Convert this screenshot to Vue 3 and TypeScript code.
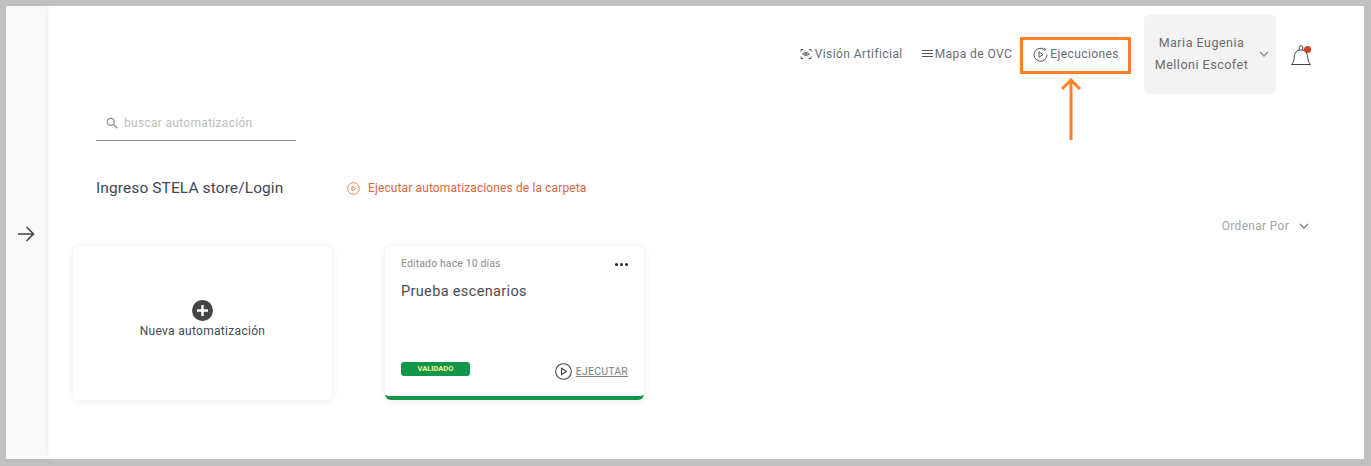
<template>
  <div class="frame">
    <aside class="side">
      <svg class="side-arrow" width="18" height="16" viewBox="0 0 18 16" fill="none" stroke="#444" stroke-width="1.6">
        <path d="M1 8h15M9.500 1l7 7-7 7" />
      </svg>
    </aside>
    <main class="main">
      <header class="top">
        <a class="nav nav-vision">
          <svg width="12" height="12" viewBox="0 0 12 12" fill="none" stroke="#555" stroke-width="1">
            <path d="M1 3.500V1.500h2M9 1.500h2v2M11 8.500v2H9M3 10.500H1v-2" />
            <path d="M2.500 6C3.500 4.300 8.500 4.300 9.500 6 8.500 7.700 3.500 7.700 2.500 6Z" />
            <circle cx="6" cy="6" r="1" fill="#555" stroke="none" />
          </svg>
          Visión Artificial
        </a>
        <a class="nav nav-map">
          <svg width="11" height="10" viewBox="0 0 11 10" fill="none" stroke="#555" stroke-width="1">
            <path d="M0 1.500h11M0 4.500h11M0 7.500h11" />
          </svg>
          Mapa de OVC
        </a>
        <a class="nav nav-exec">
          <svg width="15" height="15" viewBox="0 0 15 15" fill="none" stroke="#555" stroke-width="1">
            <path d="M11.500 2.600A6.500 6.500 0 1 0 14 7.500" />
            <path d="M11 1l1.800 1.300-1.300 1.800" />
            <path d="M6 4.800l4 2.700-4 2.700Z" />
          </svg>
          Ejecuciones
        </a>
        <button class="user">
          <span class="user-name">Maria Eugenia Melloni Escofet</span>
          <svg width="10" height="6" viewBox="0 0 10 6" fill="none" stroke="#8a8a8a" stroke-width="1.300">
            <path d="M1 1l4 4 4-4" />
          </svg>
        </button>
        <div class="bell">
          <svg width="22" height="22" viewBox="0 0 22 22" fill="none" stroke="#444" stroke-width="1">
            <path d="M1.500 20.500h19c-2-2-2.500-4-2.800-7.500-.3-4-2.200-7-6.700-7s-6.400 3-6.700 7c-.3 3.500-.8 5.500-2.800 7.500Z" />
            <path d="M9.200 6V3.500a1.800 1.800 0 0 1 3.600 0V6" />
          </svg>
          <span class="dot"></span>
        </div>
      </header>

      <div class="search">
        <svg width="12" height="12" viewBox="0 0 12 12" fill="none" stroke="#8f8f8f" stroke-width="1.300">
          <circle cx="4.800" cy="4.800" r="3.500" />
          <path d="M7.500 7.500l3.800 3.800" />
        </svg>
        <span>buscar automatización</span>
      </div>

      <div class="title-row">
        <h1>Ingreso STELA store/Login</h1>
        <a class="run-all">
          <svg width="13" height="13" viewBox="0 0 13 13" fill="none" stroke="#e8875c" stroke-width="1">
            <circle cx="6.500" cy="6.500" r="5.800" />
            <path d="M5 4.200l3.500 2.300L5 8.800Z" />
          </svg>
          Ejecutar automatizaciones de la carpeta
        </a>
      </div>

      <div class="sort">
        Ordenar Por
        <svg width="10" height="6" viewBox="0 0 10 6" fill="none" stroke="#777" stroke-width="1.300">
          <path d="M1 1l4 4 4-4" />
        </svg>
      </div>

      <section class="cards">
        <div class="card card-new">
          <svg width="21" height="21" viewBox="0 0 21 21">
            <circle cx="10.500" cy="10.500" r="10.500" fill="#444" />
            <path d="M10.500 5v11M5 10.500h11" stroke="#fff" stroke-width="2.400" />
          </svg>
          <span>Nueva automatización</span>
        </div>
        <div class="card card-item">
          <div class="card-head">
            <span class="edited">Editado hace 10 días</span>
            <span class="dots"><i></i><i></i><i></i></span>
          </div>
          <h2>Prueba escenarios</h2>
          <div class="card-foot">
            <span class="badge">VALIDADO</span>
            <a class="run">
              <svg width="17" height="17" viewBox="0 0 17 17" fill="none" stroke="#444" stroke-width="1.100">
                <circle cx="8.500" cy="8.500" r="7.800" />
                <path d="M6.500 5.300l4.800 3.200-4.800 3.200Z" />
              </svg>
              <u>EJECUTAR</u>
            </a>
          </div>
        </div>
      </section>
    </main>

    <div class="mark-box"></div>
    <svg class="mark-arrow" width="20" height="62" viewBox="0 0 20 62" fill="none" stroke="#ff7f27" stroke-width="3">
      <path d="M10 2v60M1 11l9-9 9 9" />
    </svg>
  </div>
</template>

<script setup lang="ts">
</script>

<style>
html, body { margin: 0; background: #c0c0c0; }
</style>

<style scoped>
.frame { position: relative; box-sizing: border-box; width: 1371px; height: 466px; padding: 6px 7px 7px 6px; display: flex; background: #c0c0c0; font-family: Roboto, "Liberation Sans", sans-serif; overflow: hidden; }
.side { width: 40px; background: #fafafa; box-shadow: 2px 0 5px rgba(0,0,0,.07); display: flex; align-items: center; justify-content: center; position: relative; z-index: 1; }
.side-arrow { margin-top: 0; position: relative; top: 1px; }
.main { flex: 1; background: #fff; display: flex; flex-direction: column; padding-left: 27px; }

.top { display: flex; align-items: center; justify-content: flex-end; height: 80px; margin-top: 8px; padding-right: 52px; }
.nav { display: inline-flex; align-items: center; font-size: 12px; letter-spacing: .42px; color: #666d78; white-space: nowrap; position: relative; top: -0px; }
.nav-vision { gap: 3px; margin-right: 19px; }
.nav-map { gap: 2px; margin-right: 21px; }
.nav-exec { gap: 2px; margin-right: 25px; }
.user { width: 132px; height: 80px; box-sizing: border-box; border: 0; border-radius: 6px; background: #f3f3f3; display: flex; align-items: center; padding: 0 7px 0 0; font: inherit; color: #6a6a6a; }
.user-name { flex: 1; text-align: center; font-size: 12.500px; line-height: 22px; letter-spacing: .5px; padding: 0 7px; }
.bell { position: relative; margin-left: 14px; width: 22px; height: 22px; top: 1px; }
.bell svg { display: block; }
.dot { position: absolute; top: 2px; right: 1px; width: 7px; height: 7px; border-radius: 50%; background: #cf4520; }

.search { width: 200px; height: 27px; box-sizing: border-box; margin: 20px 0 0 23px; padding: 0 0 8px 10px; border-bottom: 1px solid #8e8e8e; display: flex; align-items: center; gap: 6px; font-size: 12px; letter-spacing: .3px; color: #bdbdbd; }

.title-row { display: flex; align-items: center; margin: 37px 0 0 23px; height: 20px; }
h1 { margin: 0; width: 251px; font-size: 15.500px; font-weight: 400; letter-spacing: .1px; color: #3f4756; white-space: nowrap; }
.run-all { display: inline-flex; align-items: center; gap: 8px; font-size: 12px; letter-spacing: .12px; color: #d9683c; white-space: nowrap; }

.sort { display: flex; align-items: center; justify-content: flex-end; gap: 10px; margin-top: 20px; height: 16px; padding-right: 55px; font-size: 12px; letter-spacing: .3px; color: #a3a3a3; }

.cards { display: flex; gap: 53px; margin-top: 12px; }
.card { width: 259px; height: 154px; box-sizing: border-box; background: #fff; border-radius: 6px; box-shadow: 0 1px 8px rgba(0,0,0,.09); }
.card-new { display: flex; flex-direction: column; align-items: center; padding-top: 54px; margin-left: 0; font-size: 12px; letter-spacing: .3px; color: #444b57; }
.card-new span { margin-top: 3px; }
.card-item { display: flex; flex-direction: column; padding: 10px 16px 16px; border-bottom: 4px solid #13954b; height: 154px; }
.card-head { display: flex; align-items: center; justify-content: space-between; height: 14px; }
.edited { font-size: 10.500px; letter-spacing: .12px; color: #8d8d8d; }
.dots { display: flex; gap: 2px; margin-top: 2px; }
.dots i { width: 3px; height: 3px; border-radius: 50%; background: #222; }
h2 { margin: 13px 0 0; font-size: 14.500px; font-weight: 400; letter-spacing: .35px; color: #454c58; }
.card-foot { margin-top: auto; display: flex; align-items: center; justify-content: space-between; }
.badge { width: 69px; height: 14px; border-radius: 3px; background: #13954b; color: #f4f58f; font-size: 7.500px; font-weight: 700; line-height: 14px; text-align: center; position: relative; top: -3px; }
.run { display: inline-flex; align-items: center; gap: 4px; font-size: 10.500px; letter-spacing: .2px; color: #7d8089; }

.mark-box { position: absolute; left: 1020px; top: 37px; width: 111px; height: 37px; box-sizing: border-box; border: 3.500px solid #ff7f27; }
.mark-arrow { position: absolute; left: 1061px; top: 78px; }
</style>
